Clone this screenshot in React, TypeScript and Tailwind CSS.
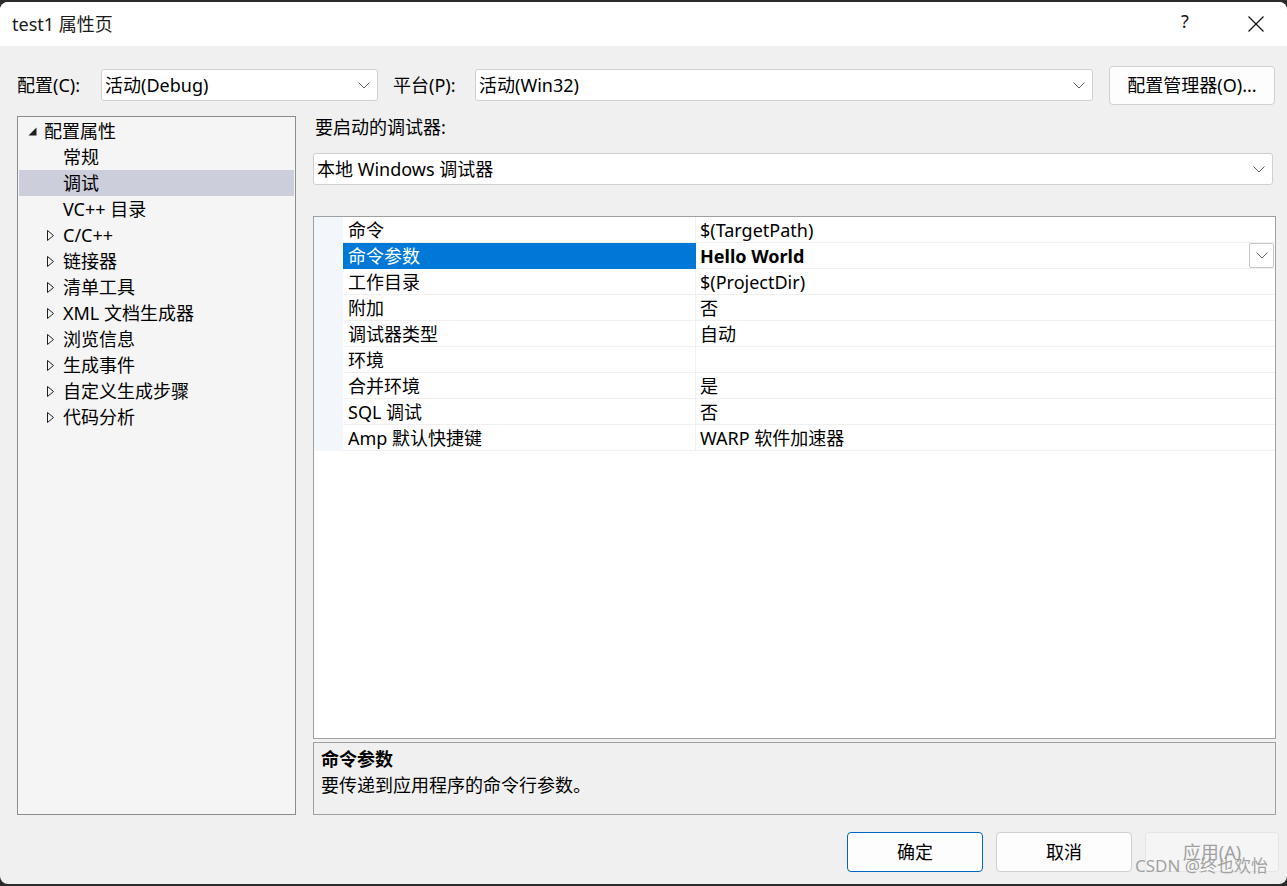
import React from "react";

const FONT = '"Noto Sans", "Noto Sans CJK SC", sans-serif';

function Chevron({ className = "" }: { className?: string }) {
  return (
    <svg width="12" height="7" viewBox="0 0 12 7" className={className}>
      <polyline points="0.5,0.5 6,6 11.5,0.5" fill="none" stroke="#606060" strokeWidth="1" />
    </svg>
  );
}

function Select({ text, className = "" }: { text: string; className?: string }) {
  return (
    <div
      className={`flex items-center justify-between bg-white border border-[#d0d0d0] rounded-[3px] pl-[3px] pr-[7px] ${className}`}
    >
      <span className="text-[18px] leading-none text-black">{text}</span>
      <Chevron />
    </div>
  );
}

const tree: { label: string; level: number; state?: "open" | "closed"; selected?: boolean }[] = [
  { label: "配置属性", level: 0, state: "open" },
  { label: "常规", level: 1 },
  { label: "调试", level: 1, selected: true },
  { label: "VC++ 目录", level: 1 },
  { label: "C/C++", level: 1, state: "closed" },
  { label: "链接器", level: 1, state: "closed" },
  { label: "清单工具", level: 1, state: "closed" },
  { label: "XML 文档生成器", level: 1, state: "closed" },
  { label: "浏览信息", level: 1, state: "closed" },
  { label: "生成事件", level: 1, state: "closed" },
  { label: "自定义生成步骤", level: 1, state: "closed" },
  { label: "代码分析", level: 1, state: "closed" },
];

const props: { name: string; value: string; selected?: boolean }[] = [
  { name: "命令", value: "$(TargetPath)" },
  { name: "命令参数", value: "Hello World", selected: true },
  { name: "工作目录", value: "$(ProjectDir)" },
  { name: "附加", value: "否" },
  { name: "调试器类型", value: "自动" },
  { name: "环境", value: "" },
  { name: "合并环境", value: "是" },
  { name: "SQL 调试", value: "否" },
  { name: "Amp 默认快捷键", value: "WARP 软件加速器" },
];

function TreeRow({ item }: { item: (typeof tree)[number] }) {
  return (
    <div
      className={`relative flex items-center h-[26px] ${item.selected ? "bg-[#cccedb]" : ""}`}
    >
      {item.level === 0 ? (
        <>
          <svg width="9" height="9" viewBox="0 0 9 9" className="absolute left-[9px] top-[9px]">
            <polygon points="8.5,0.5 8.5,8.5 0.5,8.5" fill="#1e1e1e" />
          </svg>
          <span className="ml-[25px] text-[18px] leading-none">{item.label}</span>
        </>
      ) : (
        <>
          {item.state === "closed" && (
            <svg width="7" height="11" viewBox="0 0 7 11" className="absolute left-[28px] top-[8px]">
              <polygon points="0.5,0.5 6.5,5.5 0.5,10.5" fill="none" stroke="#1e1e1e" strokeWidth="1" />
            </svg>
          )}
          <span className="ml-[44px] text-[18px] leading-none">{item.label}</span>
        </>
      )}
    </div>
  );
}

export default function App() {
  return (
    <div className="w-[1287px] h-[886px] bg-[#2b2b2b] pt-[2px] pb-[2px]" style={{ fontFamily: FONT }}>
      <div className="h-[882px] rounded-[8px] overflow-hidden flex flex-col bg-[#f0f0f0] text-black">
        {/* Title bar */}
        <div className="h-[44px] bg-white flex items-center shrink-0 relative">
          <span className="ml-[12px] text-[18px] leading-none text-[#1a1a1a]">test1 属性页</span>
          <span className="absolute left-[1181px] top-[10px] text-[18px] leading-none text-[#1a1a1a]">?</span>
          <svg width="16" height="16" viewBox="0 0 16 16" className="absolute left-[1248px] top-[14px]">
            <line x1="0.5" y1="0.5" x2="15.5" y2="15.5" stroke="#1a1a1a" strokeWidth="1.2" />
            <line x1="15.5" y1="0.5" x2="0.5" y2="15.5" stroke="#1a1a1a" strokeWidth="1.2" />
          </svg>
        </div>

        {/* Body */}
        <div className="flex-1 relative flex flex-col">
          {/* Config row */}
          <div className="flex items-center h-[38px] mt-[20px] pl-[17px]">
            <span className="text-[18px] leading-none w-[84px]">配置(C):</span>
            <Select text="活动(Debug)" className="w-[277px] h-[32px]" />
            <span className="text-[18px] leading-none ml-[15px] w-[82px]">平台(P):</span>
            <Select text="活动(Win32)" className="w-[618px] h-[32px]" />
            <div className="ml-[16px] w-[166px] h-[39px] bg-[#fdfdfd] border border-[#d0d0d0] rounded-[4px] flex items-center justify-center">
              <span className="text-[18px] leading-none">配置管理器(O)...</span>
            </div>
          </div>

          {/* Main area */}
          <div className="flex mt-[12px] h-[699px] pl-[17px]">
            {/* Tree */}
            <div className="w-[279px] h-full bg-[#f5f5f5] border border-[#8c8c8c] p-[1px]">
              {tree.map((t) => (
                <TreeRow key={t.label} item={t} />
              ))}
            </div>

            {/* Right column */}
            <div className="ml-[17px] w-[963px] flex flex-col">
              <div className="h-[22px] flex items-center pl-[2px]">
                <span className="text-[18px] leading-none">要启动的调试器:</span>
              </div>
              <Select text="本地 Windows 调试器" className="mt-[15px] w-[960px] h-[32px]" />

              {/* Property grid */}
              <div className="mt-[31px] h-[523px] bg-white border border-[#a0a0a0] flex flex-col">
                {props.map((p) => (
                  <div key={p.name} className="flex h-[26px] relative">
                    <div className="w-[29px] bg-[#f3f6fb] shrink-0" />
                    <div
                      className={`w-[353px] shrink-0 flex items-center pl-[5px] border-b border-r ${
                        p.selected
                          ? "bg-[#0078d7] text-white border-[#0078d7]"
                          : "border-[#f0f0f0]"
                      }`}
                    >
                      <span className="text-[18px] leading-none">{p.name}</span>
                    </div>
                    <div className="flex-1 flex items-center pl-[4px] border-b border-[#f0f0f0]">
                      <span className={`text-[18px] leading-none ${p.selected ? "font-bold" : ""}`}>{p.value}</span>
                    </div>
                    {p.selected && (
                      <div className="absolute right-[1px] top-[0px] w-[25px] h-[25px] bg-white border border-[#c8c8c8] rounded-[2px] flex items-center justify-center">
                        <Chevron />
                      </div>
                    )}
                  </div>
                ))}
              </div>

              {/* Description */}
              <div className="mt-[3px] h-[73px] bg-[#f0f0f0] border border-[#a0a0a0] pl-[7px] pt-[3px]">
                <div className="h-[26px] flex items-center">
                  <span className="text-[18px] leading-none font-bold">命令参数</span>
                </div>
                <div className="h-[26px] flex items-center">
                  <span className="text-[18px] leading-none">要传递到应用程序的命令行参数。</span>
                </div>
              </div>
            </div>
          </div>

          {/* Buttons */}
          <div className="flex justify-end gap-[13px] mt-[17px] pr-[8px]">
            <div className="w-[136px] h-[40px] bg-[#fdfdfd] border border-[#0067c0] rounded-[4px] flex items-center justify-center">
              <span className="text-[18px] leading-none">确定</span>
            </div>
            <div className="w-[136px] h-[40px] bg-[#fdfdfd] border border-[#d0d0d0] rounded-[4px] flex items-center justify-center">
              <span className="text-[18px] leading-none">取消</span>
            </div>
            <div className="w-[134px] h-[40px] bg-[#f5f5f5] border border-[#e5e5e5] rounded-[4px] flex items-center justify-center">
              <span className="text-[18px] leading-none text-[#a0a0a0]">应用(A)</span>
            </div>
          </div>

          {/* Watermark */}
          <span className="absolute left-[1135px] bottom-[10px] text-[17px] leading-none text-[#9a9a9a] opacity-90">
            CSDN @终也欢怡
          </span>
        </div>
      </div>
    </div>
  );
}
